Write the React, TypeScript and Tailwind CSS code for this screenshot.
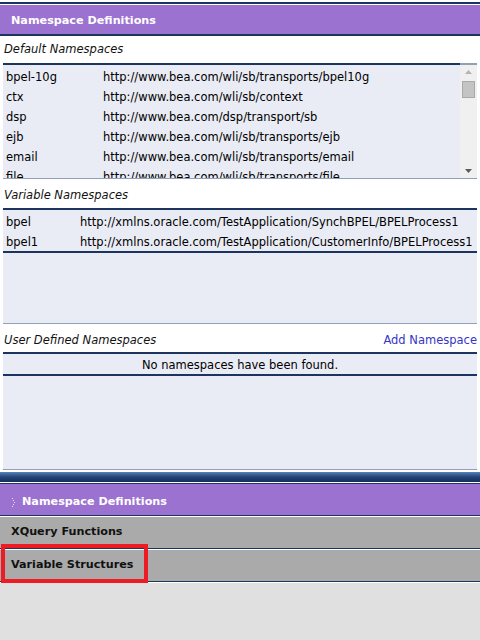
const defaultNamespaces = [
  { prefix: 'bpel-10g', uri: 'http://www.bea.com/wli/sb/transports/bpel10g' },
  { prefix: 'ctx', uri: 'http://www.bea.com/wli/sb/context' },
  { prefix: 'dsp', uri: 'http://www.bea.com/dsp/transport/sb' },
  { prefix: 'ejb', uri: 'http://www.bea.com/wli/sb/transports/ejb' },
  { prefix: 'email', uri: 'http://www.bea.com/wli/sb/transports/email' },
  { prefix: 'file', uri: 'http://www.bea.com/wli/sb/transports/file' },
  { prefix: 'ftp', uri: 'http://www.bea.com/wli/sb/transports/ftp' },
  { prefix: 'http', uri: 'http://www.bea.com/wli/sb/transports/http' },
];

const variableNamespaces = [
  { prefix: 'bpel', uri: 'http://xmlns.oracle.com/TestApplication/SynchBPEL/BPELProcess1' },
  { prefix: 'bpel1', uri: 'http://xmlns.oracle.com/TestApplication/CustomerInfo/BPELProcess1' },
];

function Scrollbar() {
  return (
    <div className="w-[17px] shrink-0 bg-[#f0f0f0] border-t-2 border-[#8fa0b8] flex flex-col items-center pt-[5px] pb-[5px]">
      <svg width="7" height="4" viewBox="0 0 7 4">
        <path d="M3.5 0 L7 4 L0 4 Z" fill="#b4b4b4" />
      </svg>
      <div className="mt-[7px] w-[13px] h-[17px] bg-[#c4c4c4] border border-[#a9a9a9]" />
      <div className="flex-1" />
      <svg width="7" height="4" viewBox="0 0 7 4">
        <path d="M0 0 L7 0 L3.5 4 Z" fill="#5a5a5a" />
      </svg>
    </div>
  );
}

function SectionLabel({ children, className }: { children: React.ReactNode; className: string }) {
  return <div className={`flex items-center italic text-[#111] ${className}`}>{children}</div>;
}

function BarHeader({ label }: { label: string }) {
  return (
    <>
      <div className="h-[31px] bg-[#aaaaaa] flex items-center px-[11px] font-bold text-[11.2px] text-[#111]">
        {label}
      </div>
      <div className="h-[1px] bg-[#1c355e]" />
      <div className="h-[1px] bg-white" />
    </>
  );
}

export default function App() {
  return (
    <div className="relative w-[480px] h-[640px] overflow-hidden bg-[#e0e0e0] font-['DejaVu_Sans',Verdana,sans-serif] text-[11.5px] text-black">
      {/* Top panel */}
      <div className="bg-white pt-[2px] pb-[2px]">
        <div className="h-[2px] bg-[#1c355e]" />
        <div className="h-[1px] bg-white" />
        <div className="h-[31px] bg-[#9c72d1] border-b-2 border-[#1c355e] flex items-center px-[11px] pt-[4px] text-white font-bold text-[11.2px]">
          Namespace Definitions
        </div>

        <div className="px-[3px]">
          <SectionLabel className="h-[27px] pl-[1px] pt-[1px]">Default Namespaces</SectionLabel>
          <div className="flex h-[116px] bg-[#e9ecf5] border-b border-[#8fa0b8]">
            <div className="flex-1 border-t-2 border-[#1c355e] overflow-hidden pt-[1px]">
              {defaultNamespaces.map((ns) => (
                <div key={ns.prefix} className="flex h-[20px] items-center pt-[4px]">
                  <span className="w-[100px] pl-[3px] shrink-0">{ns.prefix}</span>
                  <span className="whitespace-nowrap">{ns.uri}</span>
                </div>
              ))}
            </div>
            <Scrollbar />
          </div>

          <SectionLabel className="h-[29px] pl-[1px] pt-[5px]">Variable Namespaces</SectionLabel>
          <div className="h-[116px] bg-[#e9ecf5] border-t-2 border-[#1c355e] border-b border-b-[#8fa0b8]">
            <div className="border-b-2 border-[#1c355e] pt-[1px]">
              {variableNamespaces.map((ns) => (
                <div key={ns.prefix} className="flex h-[20px] items-center pt-[4px]">
                  <span className="w-[77px] pl-[3px] shrink-0">{ns.prefix}</span>
                  <span className="whitespace-nowrap">{ns.uri}</span>
                </div>
              ))}
            </div>
          </div>

          <SectionLabel className="h-[28px] pl-[1px] pt-[6px] justify-between">
            <span>User Defined Namespaces</span>
            <span className="not-italic text-[#3535c6]">Add Namespace</span>
          </SectionLabel>
          <div className="h-[118px] bg-[#e9ecf5] border-t-2 border-[#1c355e] border-b border-b-[#8fa0b8]">
            <div className="h-[22px] flex items-center justify-center pt-[4px] border-b-2 border-[#1c355e]">
              No namespaces have been found.
            </div>
          </div>
        </div>
      </div>

      {/* Splitter */}
      <div className="h-[10px] bg-gradient-to-b from-[#5a80b6] via-[#22457a] to-[#152e55]" />
      <div className="h-[1px] bg-white" />
      <div className="h-[1px] bg-[#1c355e]" />

      {/* Accordion headers */}
      <div className="h-[31px] bg-[#9c72d1] flex items-center pl-[12px] pt-[6px] text-white font-bold text-[11.2px]">
        <svg width="4" height="9" viewBox="0 0 4 9" className="mr-[6px]">
          <rect x="0" y="0" width="1" height="1" fill="#e6dcf6" />
          <rect x="1" y="2" width="1" height="1" fill="#e6dcf6" />
          <rect x="2" y="4" width="1" height="1" fill="#e6dcf6" />
          <rect x="1" y="6" width="1" height="1" fill="#e6dcf6" />
          <rect x="0" y="8" width="1" height="1" fill="#e6dcf6" />
        </svg>
        Namespace Definitions
      </div>
      <div className="h-[1px] bg-[#1c355e]" />
      <div className="h-[1px] bg-white" />
      <BarHeader label="XQuery Functions" />
      <BarHeader label="Variable Structures" />

      {/* Highlight annotation */}
      <div className="absolute left-[1px] top-[544px] w-[147px] h-[39px] border-4 border-[#ed1c24]" />
    </div>
  );
}
